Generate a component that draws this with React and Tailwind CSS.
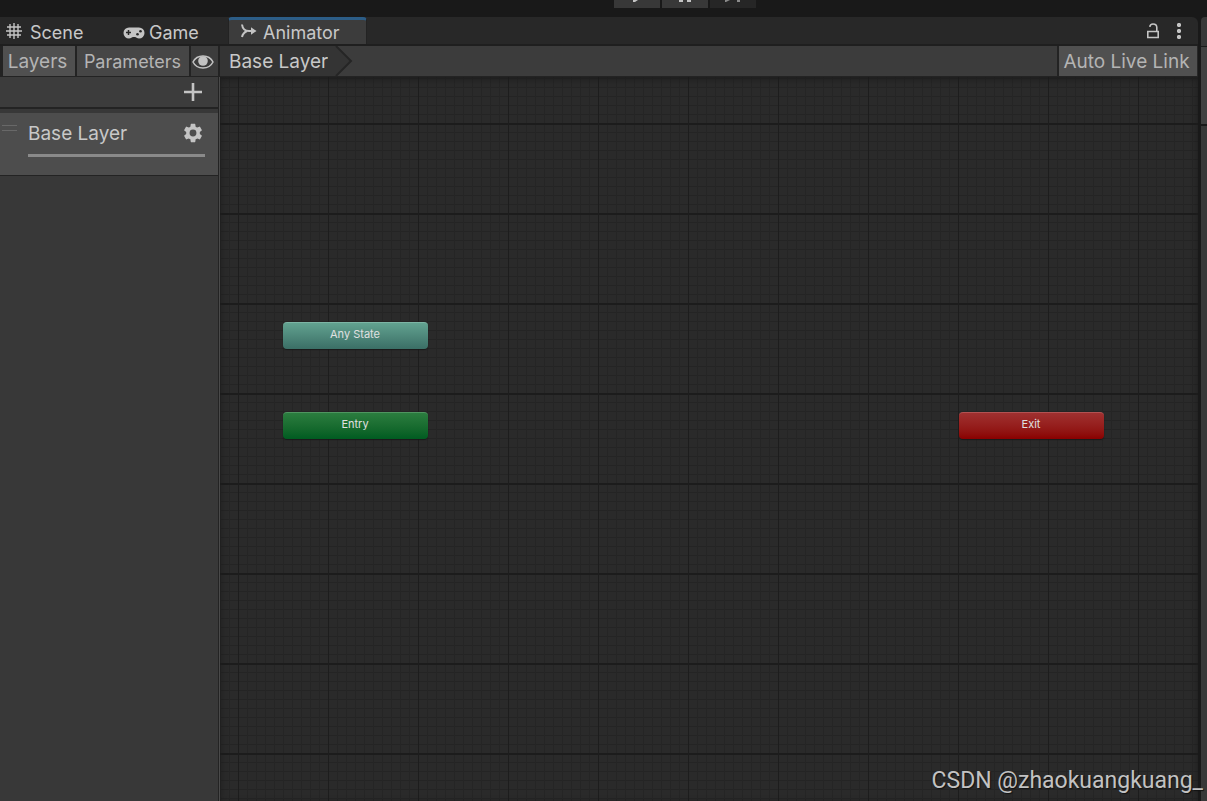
import React from 'react'

const nodes = [
  { name: 'Any State', className: 'left-[63px] top-[245px] from-[#62a290] to-[#3b6f66] border-t-[#7db5a5]' },
  { name: 'Entry', className: 'left-[63px] top-[335px] from-[#2b7d3f] to-[#005c21] border-t-[#4f9560]' },
  { name: 'Exit', className: 'left-[739px] top-[335px] from-[#a03030] to-[#8a0000] border-t-[#b35252]' },
]

const TopBar = () => (
  <div className="flex h-[17px] shrink-0 items-start justify-center gap-[2px] bg-[#191919] pl-[162px]">
    <button aria-label="Play" className="flex h-2 w-[46px] justify-center bg-[#383838]">
      <svg width="10" height="3" viewBox="0 0 10 3"><path d="M1 0h5L3 2H1z" fill="#c4c4c4" /></svg>
    </button>
    <button aria-label="Pause" className="flex h-2 w-[46px] justify-center bg-[#383838]">
      <svg width="12" height="3" viewBox="0 0 12 3"><path d="M0 0h4v2H0zM8 0h4v2H8z" fill="#c4c4c4" /></svg>
    </button>
    <button aria-label="Step" className="flex h-2 w-[46px] justify-center bg-[#262626]">
      <svg width="18" height="3" viewBox="0 0 18 3"><path d="M1 0h5L2 2H1zM13 0h3v2h-3z" fill="#8a8a8a" /></svg>
    </button>
  </div>
)

const TabBar = () => (
  <div className="flex h-[29px] shrink-0 items-stretch rounded-tr-md border-b-2 border-[#1f1f1f] bg-[#282828]">
    <button className="flex w-[116px] items-center gap-2 pt-1 pl-[6px]">
      <svg className="-mt-1" width="16" height="16" viewBox="0 0 16 16" fill="none" stroke="#c4c4c4" strokeWidth="1.4">
        <path d="M4 1v14M8 0v16M12 1v14M1 4h14M0 8h16M1 12h14" />
      </svg>
      Scene
    </button>
    <button className="flex w-[112px] items-center gap-1 pt-1 pl-[7px]">
      <svg width="22" height="12" viewBox="0 0 22 12">
        <path d="M6 0.5h10a5.5 5.5 0 0 1 0 11c-2 0-3-1.5-4-1.5h-2c-1 0-2 1.5-4 1.5a5.5 5.5 0 0 1 0-11z" fill="#c4c4c4" />
        <path d="M5.500 3v5M3 5.500h5" stroke="#282828" strokeWidth="1.5" />
        <circle cx="14.5" cy="7.2" r="1.3" fill="#282828" />
        <circle cx="17.5" cy="4.2" r="1.3" fill="#282828" />
      </svg>
      Game
    </button>
    <button className="flex w-[139px] items-center gap-[6px] rounded-t-sm border-x border-t-[3px] border-x-[#232323] border-t-[#2c5d87] bg-[#3c3c3c] pt-px pl-3">
      <svg className="-mt-1" width="16" height="14" viewBox="0 0 16 14" fill="none" stroke="#c4c4c4" strokeWidth="2">
        <path d="M1 0.500c0.500 4 3 6.500 7 6.500h3M1 13c0.500-3 2-4.500 5-6" />
        <path d="M10 3.200L15.500 7 10 10.800z" fill="#c4c4c4" stroke="none" />
      </svg>
      Animator
    </button>
    <div className="ml-auto flex items-center gap-4 pt-px pr-4">
      <button aria-label="Lock">
        <svg width="14" height="16" viewBox="0 0 14 16" fill="none" stroke="#c4c4c4" strokeWidth="1.6">
          <path d="M1.800 8.500h10.400v6H1.800zM3.800 3.800C4 2 5.200 1 7 1c2.500 0 3.800 1.300 3.800 3.500v4" />
        </svg>
      </button>
      <button aria-label="More">
        <svg width="6" height="16" viewBox="0 0 6 16" fill="#c4c4c4">
          <path d="M2 0h2l1 1v2L4 4H2L1 3V1zM2 6h2l1 1v2l-1 1H2L1 9V7zM2 12h2l1 1v2l-1 1H2l-1-1v-2z" />
        </svg>
      </button>
    </div>
  </div>
)

const LayersPanel = () => (
  <aside className="flex w-[220px] shrink-0 flex-col bg-[#383838] text-[19px]">
    <div className="flex h-[31px] gap-[2px] border-b border-[#232323] bg-[#232323] pl-[3px] text-[#b4b4b4]">
      <button className="w-[72px] bg-[#505050] pt-px pr-[3px]">Layers</button>
      <button className="w-[112px] bg-[#464646] pt-px pr-px text-[18px]">Parameters</button>
      <button aria-label="Toggle panel" className="mr-[2px] flex flex-1 items-center justify-center bg-[#3c3c3c] pt-px pr-[3px]">
        <svg width="22" height="14" viewBox="0 0 22 14">
          <path d="M1 7C5-1 17-1 21 7C17 15 5 15 1 7z" fill="none" stroke="#c4c4c4" strokeWidth="1.5" />
          <circle cx="11" cy="6" r="4.8" fill="#c4c4c4" />
        </svg>
      </button>
    </div>
    <div className="flex flex-1 flex-col border-r border-[#4a4a4a]">
      <div className="flex flex-1 flex-col border-r border-[#232323]">
        <div className="flex h-8 items-center justify-end border-b-2 border-[#232323] bg-[#3c3c3c] pr-4">
          <button aria-label="Add layer">
            <svg width="18" height="18" viewBox="0 0 18 18"><path d="M9 0v18M0 9h18" stroke="#c4c4c4" strokeWidth="2.6" /></svg>
          </button>
        </div>
        <div className="mt-1 flex h-[63px] items-start border-b border-[#232323] bg-[#4d4d4d]">
          <svg className="mt-3 ml-[2px]" width="15" height="6" viewBox="0 0 15 6"><path d="M0 0.500h15M0 5.500h15" stroke="#686868" /></svg>
          <div className="mr-[13px] ml-[11px] flex-1 border-b-[3px] border-[#8a8a8a] pb-2">
            <div className="flex items-center justify-between pt-[9px] pr-[2px]">
              <span>Base Layer</span>
              <button aria-label="Layer settings">
                <svg className="-mt-[2px]" width="20" height="20" viewBox="1.500 1.500 21 21" fill="#c4c4c4">
                  <path d="M19.140 12.940c.040-.3.060-.610.060-.940s-.020-.640-.070-.940l2.030-1.580a.49.49 0 0 0 .12-.61l-1.920-3.320a.49.49 0 0 0-.59-.22l-2.390.96a7 7 0 0 0-1.620-.94l-.36-2.540a.48.48 0 0 0-.48-.41h-3.840a.48.48 0 0 0-.47.41l-.36 2.540a7 7 0 0 0-1.620.94l-2.390-.96a.48.48 0 0 0-.59.22L2.740 8.870a.48.48 0 0 0 .12.61l2.030 1.580a6 6 0 0 0 0 1.880l-2.030 1.580a.49.49 0 0 0-.12.61l1.920 3.320c.12.220.37.290.59.220l2.390-.96a7 7 0 0 0 1.620.94l.36 2.540c.05.240.24.410.48.410h3.840c.24 0 .44-.17.47-.41l.36-2.540a7 7 0 0 0 1.620-.94l2.390.96c.22.080.47 0 .59-.22l1.920-3.320a.48.48 0 0 0-.12-.61zM12 15.600a3.600 3.600 0 1 1 0-7.200 3.600 3.600 0 0 1 0 7.200z" />
                </svg>
              </button>
            </div>
          </div>
        </div>
      </div>
    </div>
  </aside>
)

const Graph = () => (
  <main className="flex min-w-0 flex-1 flex-col">
    <div className="flex h-[31px] shrink-0 border-b border-[#232323] bg-[#3c3c3c] text-[19px]">
      <button className="bg-[#343434] pt-px pl-[9px]">Base Layer</button>
      <svg className="mr-auto" width="26" height="30" viewBox="0 0 26 30">
        <path d="M0 0h8l15 15L8 30H0z" fill="#343434" />
        <path d="M8 0l15 15L8 30" fill="none" stroke="#252525" strokeWidth="2" />
      </svg>
      <button className="w-[141px] border-r border-l-2 border-r-[#282828] border-l-[#232323] bg-[#505050] pt-px pr-[3px] text-[#b4b4b4]">Auto Live Link</button>
    </div>
    {/* 9px cells with a heavier line every 90px */}
    <div className="relative flex-1 overflow-hidden bg-[#2a2a2a] bg-[linear-gradient(to_right,#1d1d1d_1px,transparent_1px),linear-gradient(to_bottom,#1c1c1c_2px,transparent_2px),linear-gradient(to_right,#252525_1px,transparent_1px),linear-gradient(to_bottom,#242424_1px,transparent_1px)] bg-[length:90px_90px,90px_90px,9px_9px,9px_9px] bg-[position:18px_0,0_46px,0_0,0_1px] shadow-[inset_0_2px_6px_#1c1c1c]">
      {nodes.map((node) => (
        <button
          key={node.name}
          className={`absolute flex h-[27px] w-[145px] justify-center rounded border-t bg-linear-to-b pt-[3px] pr-px text-[11px] leading-4 text-[#e0e0e0] shadow-[0_1px_1px_#1a1a1a] ${node.className}`}
        >
          {node.name}
        </button>
      ))}
    </div>
  </main>
)

const App = () => {
  return (
    <div className="relative flex h-screen flex-col overflow-hidden bg-[#191919] font-['Inter',sans-serif] text-[18px] leading-6 text-[#c8c8c8]">
      <TopBar />
      <div className="flex min-h-0 flex-1">
        <section className="flex min-w-0 flex-1 flex-col">
          <TabBar />
          <div className="flex min-h-0 flex-1">
            <LayersPanel />
            <Graph />
          </div>
        </section>
        <aside className="ml-[3px] flex w-[6px] shrink-0 flex-col rounded-tl bg-[#383838]">
          <div className="h-[30px] border-b border-[#191919]"></div>
          <div className="h-[79px] border-b-2 border-[#191919] bg-[#414141]"></div>
        </aside>
      </div>
      <p className="absolute right-1 bottom-1 font-['Roboto',sans-serif] text-[23px] leading-8 text-[#c2c2c2] [text-shadow:1px_1px_1px_#111]">
        CSDN @zhaokuangkuang_
      </p>
    </div>
  )
}

export default App
